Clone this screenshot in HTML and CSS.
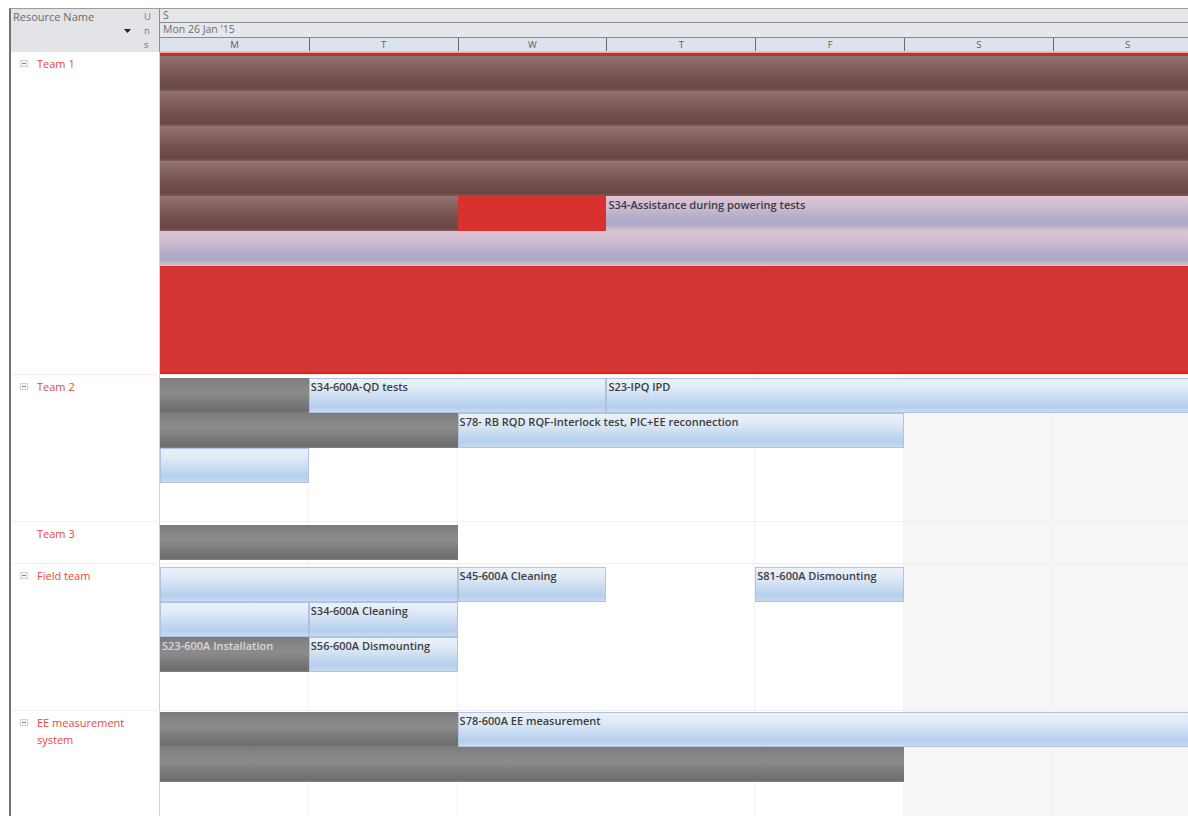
FILE: index.html
```html
<!DOCTYPE html>
<html lang="en">
<head>
<meta charset="utf-8">
<title>Resource Usage</title>
<link rel="stylesheet" href="styles.css">
</head>
<body>
<div class="view">
  <div class="head">
    <div class="hname">
      <span class="htitle">Resource Name</span>
      <svg class="drop" width="7" height="4" viewBox="0 0 7 4"><path d="M0 0h7L3.5 4z" fill="#222"/></svg>
    </div>
    <div class="huns"><span>U</span><span>n</span><span class="hs">s</span></div>
    <div class="htime">
      <div class="hrow">S</div>
      <div class="hrow">Mon 26 Jan '15</div>
      <div class="hdays"><span>M</span><span>T</span><span>W</span><span>T</span><span>F</span><span>S</span><span>S</span></div>
    </div>
  </div>

  <div class="group team1">
    <div class="label"><span class="toggle"></span><span class="name">Team 1</span></div>
    <div class="track">
      <div class="cap"></div>
      <div class="lane"><div class="bar over s1 eend"></div></div>
      <div class="lane"><div class="bar over s1 eend"></div></div>
      <div class="lane"><div class="bar over s1 eend"></div></div>
      <div class="lane"><div class="bar over s1 eend"></div></div>
      <div class="lane">
        <div class="bar over s1 e3"></div>
        <div class="bar hot s3 e4"></div>
        <div class="bar lav s4 eend">S34-Assistance during powering tests</div>
      </div>
      <div class="lane"><div class="bar lav s1 eend"></div></div>
      <div class="block"></div>
    </div>
  </div>

  <div class="group team2">
    <div class="label"><span class="toggle"></span><span class="name">Team 2</span></div>
    <div class="track">
      <div class="lane">
        <div class="bar gray s1 e2"></div>
        <div class="bar blue s2 e4">S34-600A-QD tests</div>
        <div class="bar blue s4 eend">S23-IPQ IPD</div>
      </div>
      <div class="lane">
        <div class="bar gray s1 e3"></div>
        <div class="bar blue s3 e6">S78- RB RQD RQF-Interlock test, PIC+EE reconnection</div>
      </div>
      <div class="lane"><div class="bar blue s1 e2"></div></div>
    </div>
  </div>

  <div class="group team3">
    <div class="label"><span class="toggle off"></span><span class="name">Team 3</span></div>
    <div class="track">
      <div class="lane"><div class="bar gray s1 e3"></div></div>
    </div>
  </div>

  <div class="group field">
    <div class="label"><span class="toggle"></span><span class="name">Field team</span></div>
    <div class="track">
      <div class="lane">
        <div class="bar blue s1 e3"></div>
        <div class="bar blue s3 e4">S45-600A Cleaning</div>
        <div class="bar blue s5 e6">S81-600A Dismounting</div>
      </div>
      <div class="lane">
        <div class="bar blue s1 e2"></div>
        <div class="bar blue s2 e3">S34-600A Cleaning</div>
      </div>
      <div class="lane">
        <div class="bar gray dim s1 e2">S23-600A Installation</div>
        <div class="bar blue s2 e3">S56-600A Dismounting</div>
      </div>
    </div>
  </div>

  <div class="group ee">
    <div class="label"><span class="toggle"></span><span class="name">EE measurement system</span></div>
    <div class="track">
      <div class="lane">
        <div class="bar gray s1 e3"></div>
        <div class="bar blue s3 eend">S78-600A EE measurement</div>
      </div>
      <div class="lane"><div class="bar gray s1 e6"></div></div>
    </div>
  </div>
</div>
</body>
</html>
```
FILE: styles.css
```css
* { box-sizing: border-box; }

html, body {
  margin: 0;
  background: #fff;
}

body {
  width: 1188px;
  height: 816px;
  overflow: hidden;
  font-family: "Open Sans", "Liberation Sans", sans-serif;
  color: #333;
}

/* outer frame of the usage view */
.view {
  margin: 8px 0 0 9px;
  height: 808px;
  border-left: 2px solid #737373;
  border-top: 1px solid #9d9d9d;
  overflow: hidden;
}

/* ---------- header ---------- */
.head {
  display: flex;
  height: 43px;
  background: #e2e4e8;
}

.hname {
  width: 130px;
  flex: none;
  position: relative;
  padding: 0 0 0 2px;
  font-size: 11px;
  line-height: 15px;
  color: #6b6b6b;
}

.drop {
  position: absolute;
  left: 113px;
  top: 20px;
}

.huns {
  width: 19px;
  flex: none;
  border-right: 1px solid #8e8e8e;
  display: flex;
  flex-direction: column;
  padding: 1px 0 0 3px;
  font-size: 9.5px;
  line-height: 14px;
  color: #7a7a7a;
}

.huns .hs { color: #a5633e; }

.htime {
  flex: 1;
  min-width: 0;
  overflow: hidden;
  display: flex;
  flex-direction: column;
}

.hrow {
  height: 14px;
  border-bottom: 1.5px solid #8a8a8a;
  padding: 0 0 0 3px;
  font-size: 10.5px;
  line-height: 13px;
  color: #6e6e6e;
  background: #e5e7eb;
}

.hrow + .hrow { height: 15px; }

.hdays {
  display: grid;
  grid-template-columns: repeat(7, 148.8px);
  height: 14px;
  background: #dde3ec;
  border-bottom: 1px solid #f2c1b4;
}

.hdays span {
  text-align: center;
  font-size: 9.5px;
  line-height: 13px;
  color: #606060;
}

.hdays span + span { border-left: 1.5px solid #6a6a6a; }

/* ---------- resource groups ---------- */
.group {
  display: flex;
  border-top: 1px solid #efefef;
}

.team1 { height: 322px; border-top: 0; }
.team2 { height: 147px; border-top-color: #fbe9e7; }
.team3 { height: 42px; }
.field { height: 147px; }
.ee { height: 110px; }

.label {
  width: 149px;
  flex: none;
  display: flex;
  align-items: flex-start;
  padding: 3px 0 0 9px;
  border-right: 1px solid #d0d0d0;
  font-size: 11px;
  line-height: 17px;
  color: #e84840;
}

.toggle {
  width: 8px;
  height: 7px;
  flex: none;
  margin: 5px 9px 0 0;
  border: 1px solid #d3d3d3;
  background: linear-gradient(#8a8a8a, #8a8a8a) center / 4px 1px no-repeat, #f3f3f3;
}

.toggle.off { visibility: hidden; }

.name { width: 100px; }

/* timeline body: weekdays white, weekend shaded, faint day rules */
.track {
  flex: 1;
  min-width: 0;
  overflow: hidden;
  background-color: #fff;
  background-image:
    repeating-linear-gradient(to right, transparent 0 148px, #f3f3f3 148px 148.8px),
    linear-gradient(to right, transparent 744px, #f6f6f6 744px);
}

.team2 .track, .team3 .track, .field .track { padding-top: 3px; }
.ee .track { padding-top: 1px; }

.cap {
  height: 4px;
  background: #c7302c;
  border-top: 1px solid #e7a99d;
}

.lane {
  display: grid;
  grid-template-columns: repeat(7, 148.8px);
  height: 35px;
}

.block {
  height: 108px;
  background: #d33632;
  border-bottom: 2px solid #e1241f;
}

/* ---------- bars ---------- */
.bar {
  height: 35px;
  padding: 2px 0 0 2px;
  font-size: 11px;
  font-weight: 600;
  line-height: 14px;
  color: #3d3d3d;
  white-space: nowrap;
  overflow: hidden;
}

.s1 { grid-column-start: 1; }
.s2 { grid-column-start: 2; }
.s3 { grid-column-start: 3; }
.s4 { grid-column-start: 4; }
.s5 { grid-column-start: 5; }
.e2 { grid-column-end: 2; }
.e3 { grid-column-end: 3; }
.e4 { grid-column-end: 4; }
.e6 { grid-column-end: 6; }
.eend { grid-column-end: -1; }

.over {
  background: linear-gradient(#927473 0%, #86625f 28%, #74504e 60%, #6a4645 92%, #7d5b5a 100%);
}

.hot { background: #d8322f; }

.lav {
  background: linear-gradient(#dcc6d3 0%, #cdbccf 30%, #b0abc8 65%, #aea9c6 82%, #d6c6d3 100%);
  color: #3a3a48;
}

.blue {
  background: linear-gradient(#eaf1fa 0%, #dfe9f6 30%, #c6daf1 60%, #b5cfed 85%, #c8dcf2 100%);
  border: 1px solid #aec3df;
  padding: 1px 0 0 1px;
}

.gray {
  background: linear-gradient(#7b7b7b 0%, #878787 25%, #8b8b8b 45%, #777 75%, #6d6d6d 95%, #838383 100%);
}

.dim { color: #d8d8d8; }
```
